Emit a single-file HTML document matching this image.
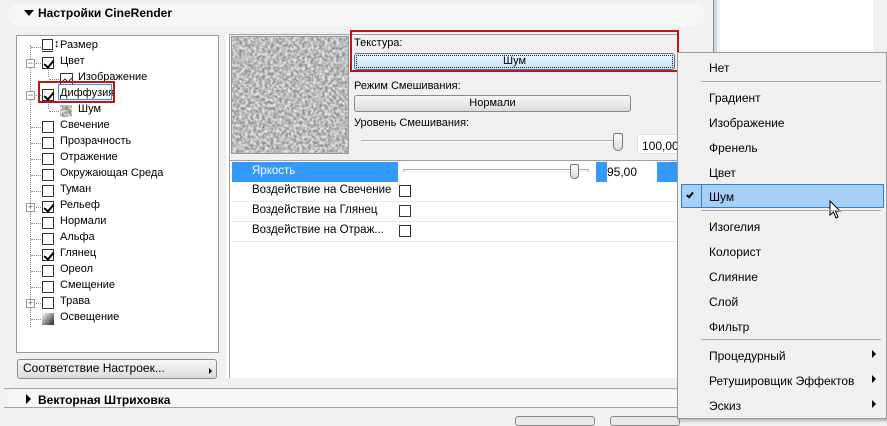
<!DOCTYPE html><html><head><meta charset="utf-8"><style>
*{margin:0;padding:0;box-sizing:border-box}
body{width:887px;height:420px;background:#f0f0f0;font-family:"Liberation Sans",sans-serif;font-size:11px;color:#000;position:relative;overflow:hidden}
.a{position:absolute;white-space:nowrap}
.cb{position:absolute;width:12px;height:12px;border:1px solid #333;background:#fff}
.ck::after{content:"";position:absolute;left:3px;top:0px;width:4px;height:8px;border:solid #000;border-width:0 2px 2px 0;transform:rotate(40deg)}
.dot{position:absolute;border-top:1px dotted #888;height:0}
.vd{position:absolute;border-left:1px dotted #888;width:0}
.pm{position:absolute;width:9px;height:9px;border:1px solid #999;background:#fff;font-size:9px;line-height:7px;text-align:center;color:#555}
.btn{position:absolute;border:1px solid #888;border-radius:3px;background:linear-gradient(#f6f6f6,#dcdcdc);text-align:center;line-height:15px}
.mi{position:absolute;left:709px;font-size:12px}
.sep{position:absolute;left:701px;width:180px;height:1px;background:#aaa}
.ar{position:absolute;left:872px;width:0;height:0;border-left:4px solid #000;border-top:4px solid transparent;border-bottom:4px solid transparent}
.tr{position:absolute;left:252px;font-size:11.5px}
</style></head><body>
<div class="a" style="left:8px;top:4px;width:697px;height:22px;background:#f6f6f6;border-radius:10px"></div>
<div class="a" style="left:24px;top:10px;width:0;height:0;border-top:6px solid #000;border-left:5px solid transparent;border-right:5px solid transparent"></div>
<div class="a" style="left:38px;top:6px;font-weight:bold;font-size:12px">Настройки CineRender</div>
<div class="a" style="left:713px;top:0;width:4px;height:52px;background:#c8d8ec;border-left:1px solid #888"></div>
<div class="a" style="left:720px;top:0;width:153px;height:52px;background:#fff"></div>

<!-- tree -->
<div class="a" style="left:16px;top:35px;width:203px;height:318px;background:#fff;border:1px solid #999"></div>
<div class="vd" style="left:30px;top:45px;height:282px"></div>
<div class="vd" style="left:48px;top:67px;height:10px"></div>
<div class="vd" style="left:48px;top:99px;height:10px"></div>
<div id="tree"></div>
<div class="a" style="left:38px;top:81px;width:77px;height:22px;border:2px solid #c0141c"></div>
<div class="a" style="left:58px;top:84px;width:54px;height:16px;border:1px solid #3a8ee6"></div>

<div class="btn" style="left:17px;top:359px;width:200px;height:20px;text-align:left;padding-left:5px;line-height:17px;font-size:12px;border-radius:3px">Соответствие Настроек...</div>
<div class="a" style="left:209px;top:368px;width:0;height:0;border-left:3px solid #000;border-top:3px solid transparent;border-bottom:3px solid transparent"></div>

<div class="a" style="left:4px;top:388px;width:676px;height:1px;background:#a0a0a0"></div>
<div class="a" style="left:8px;top:390px;width:672px;height:17px;background:#f7f7f7;border-radius:8px 0 0 0"></div>
<div class="a" style="left:4px;top:407px;width:676px;height:1px;background:#a0a0a0"></div>
<div class="a" style="left:26px;top:394px;width:0;height:0;border-left:5px solid #000;border-top:5px solid transparent;border-bottom:5px solid transparent"></div>
<div class="a" style="left:38px;top:393px;font-weight:bold;font-size:12px">Векторная Штриховка</div>
<div class="a" style="left:515px;top:416px;width:80px;height:10px;border:1px solid #888;border-radius:3px;background:#e8e8e8"></div>
<div class="a" style="left:610px;top:416px;width:70px;height:10px;border:1px solid #888;border-radius:3px;background:#e8e8e8"></div>

<!-- right panel -->
<div class="a" style="left:229px;top:34px;width:450px;height:344px;border:1px solid #a0a0a0;border-bottom:none;border-right:none"></div>
<div class="a" style="left:226px;top:34px;width:3px;height:344px;background:#fff"></div>
<svg class="a" style="left:231px;top:36px" width="118" height="118"><filter id="n"><feTurbulence type="fractalNoise" baseFrequency="0.35" numOctaves="2" seed="3"/><feColorMatrix type="matrix" values="0 0 0 0 0.2 0 0 0 0 0.2 0 0 0 0 0.2 0 0 0 -2.2 1.6"/></filter><rect width="118" height="118" fill="#e6e6e6"/><rect width="118" height="118" filter="url(#n)" opacity="0.8"/><rect x=".5" y=".5" width="117" height="117" fill="none" stroke="#999"/></svg>
<div class="a" style="left:350px;top:30px;width:329px;height:42px;border:2px solid #c0141c"></div>
<div class="a" style="left:354px;top:37px">Текстура:</div>
<div class="a" style="left:354px;top:53px;width:321px;height:17px;border:1px solid #3c7fb1;border-radius:3px;background:linear-gradient(#eaf6fd,#bee6fd);text-align:center;line-height:14px;outline:1px dotted #600;outline-offset:-3px">Шум</div>
<div class="a" style="left:354px;top:80px">Режим Смешивания:</div>
<div class="btn" style="left:354px;top:95px;width:277px;height:17px">Нормали</div>
<div class="a" style="left:354px;top:117px">Уровень Смешивания:</div>
<div class="a" style="left:361px;top:140px;width:260px;height:2px;border:1px solid #aaa;border-bottom-color:#fff"></div>
<div class="a" style="left:613px;top:133px;width:10px;height:18px;border:1px solid #777;border-radius:2px 2px 5px 5px;background:linear-gradient(#fafafa,#ddd)"></div>
<div class="a" style="left:637px;top:134px;width:42px;height:20px;background:#fff;border:1px solid #ddd;border-right:none;padding:4px 0 0 4px;font-size:12px">100,00</div>

<div class="a" style="left:230px;top:160px;width:450px;height:218px;background:#fff;border-top:1px solid #a0a0a0"></div>
<div class="a" style="left:232px;top:162px;width:166px;height:20px;background:#3399ff;color:#fff;padding:3px 0 0 20px;font-size:11.5px">Яркость</div>
<div class="a" style="left:398px;top:162px;width:198px;height:20px;background:#fff"></div>
<div class="a" style="left:403px;top:169px;width:186px;height:3px;border:1px solid #aaa;border-bottom-color:#eee"></div>
<div class="a" style="left:570px;top:164px;width:9px;height:15px;border:1px solid #777;border-radius:2px 2px 4px 4px;background:linear-gradient(#fafafa,#ddd)"></div>
<div class="a" style="left:596px;top:162px;width:11px;height:20px;background:#3399ff"></div>
<div class="a" style="left:607px;top:162px;width:50px;height:20px;background:#fff;padding:3px 0 0 0;font-size:12px">95,00</div>
<div class="a" style="left:657px;top:162px;width:22px;height:20px;background:#3399ff"></div>
<div class="a" style="left:232px;top:201px;width:447px;height:1px;background:#e8e8e8"></div>
<div class="a" style="left:232px;top:221px;width:447px;height:1px;background:#e8e8e8"></div>
<div class="a" style="left:232px;top:241px;width:447px;height:1px;background:#e8e8e8"></div>
<div class="tr" style="top:184px">Воздействие на Свечение</div>
<div class="tr" style="top:204px">Воздействие на Глянец</div>
<div class="tr" style="top:224px">Воздействие на Отраж...</div>
<div class="cb" style="left:399px;top:185px"></div>
<div class="cb" style="left:399px;top:205px"></div>
<div class="cb" style="left:399px;top:225px"></div>

<!-- menu -->
<div class="a" style="left:677px;top:52px;width:210px;height:367px;background:#f0f0f0;border:1px solid #999;box-shadow:2px 2px 3px rgba(0,0,0,.25)"></div>
<div class="mi" style="top:61px">Нет</div>
<div class="sep" style="top:81px"></div>
<div class="mi" style="top:91px">Градиент</div>
<div class="mi" style="top:116px">Изображение</div>
<div class="mi" style="top:141px">Френель</div>
<div class="mi" style="top:166px">Цвет</div>
<div class="a" style="left:681px;top:184px;width:203px;height:24px;background:#a6d0f8;border:1px solid #2d7fd0"></div>
<div class="a" style="left:681px;top:184px;width:21px;height:24px;border:1px solid #2d7fd0;background:#a6d0f8"></div>
<div class="a" style="left:688px;top:191px;width:4px;height:7px;border:solid #000;border-width:0 2px 2px 0;transform:rotate(40deg)"></div>
<div class="mi" style="top:190px">Шум</div>
<svg class="a" style="left:829px;top:200px" width="14" height="20"><path d="M1 1 L1 15 L4.5 12 L7 18 L9 17 L6.5 11 L11 11 Z" fill="#fff" stroke="#000"/></svg>
<div class="sep" style="top:210px"></div>
<div class="mi" style="top:220px">Изогелия</div>
<div class="mi" style="top:245px">Колорист</div>
<div class="mi" style="top:270px">Слияние</div>
<div class="mi" style="top:295px">Слой</div>
<div class="mi" style="top:320px">Фильтр</div>
<div class="sep" style="top:339px"></div>
<div class="mi" style="top:349px">Процедурный</div><div class="ar" style="top:350px"></div>
<div class="mi" style="top:374px">Ретушировщик Эффектов</div><div class="ar" style="top:375px"></div>
<div class="mi" style="top:399px">Эскиз</div><div class="ar" style="top:400px"></div>

<script>
var items=[["Размер",0,"size"],["Цвет",0,"ck","m"],["Изображение",1,"img"],["Диффузия",0,"ck","m"],["Шум",1,"noise"],["Свечение",0,""],["Прозрачность",0,""],["Отражение",0,""],["Окружающая Среда",0,""],["Туман",0,""],["Рельеф",0,"ck","p"],["Нормали",0,""],["Альфа",0,""],["Глянец",0,"ck"],["Ореол",0,""],["Смещение",0,""],["Трава",0,"","p"],["Освещение",0,"light"]];
var h="";items.forEach(function(it,i){var y=37+i*16;var ind=it[1]?18:0;
if(it[3])h+='<div class="pm" style="left:26px;top:'+(y+6)+'px">'+(it[3]=="m"?"−":"+")+'</div>';
h+='<div class="dot" style="left:'+(31+ind+(it[3]&&!ind?5:0))+'px;top:'+(y+10)+'px;width:'+(10-(it[3]?5:0))+'px"></div>';
var x=42+ind;
if(it[2]=="size")h+='<div class="a" style="left:'+x+'px;top:'+(y+2)+'px;width:11px;height:11px;border:1px solid #333"></div><div class="a" style="left:'+x+'px;top:'+(y+14)+'px;width:11px;height:1px;background:#333"></div><div class="a" style="left:'+(x+12)+'px;top:'+(y+1)+'px;font-size:11px">↕</div>';
else if(it[2]=="img")h+='<svg class="a" style="left:'+x+'px;top:'+(y+4)+'px" width="13" height="12"><rect x=".5" y=".5" width="12" height="11" fill="#fff" stroke="#333"/><path d="M1 10 L5 6 L8 9 L12 5" fill="none" stroke="#333"/></svg>';
else if(it[2]=="noise")h+='<svg class="a" style="left:'+x+'px;top:'+(y+4)+'px" width="12" height="12"><rect width="12" height="12" fill="#eee"/><rect width="12" height="12" fill="#888" filter="url(#n)"/></svg>';
else if(it[2]=="light")h+='<div class="a" style="left:'+x+'px;top:'+(y+4)+'px;width:12px;height:12px;background:linear-gradient(135deg,#fff,#222)"></div>';
else h+='<div class="cb '+(it[2]=="ck"?"ck":"")+'" style="left:'+x+'px;top:'+(y+4)+'px"></div>';
h+='<div class="a" style="left:'+(x+18)+'px;top:'+(y+2)+'px;font-size:11px">'+it[0]+'</div>';});
document.getElementById("tree").innerHTML=h;
</script>
</body></html>
